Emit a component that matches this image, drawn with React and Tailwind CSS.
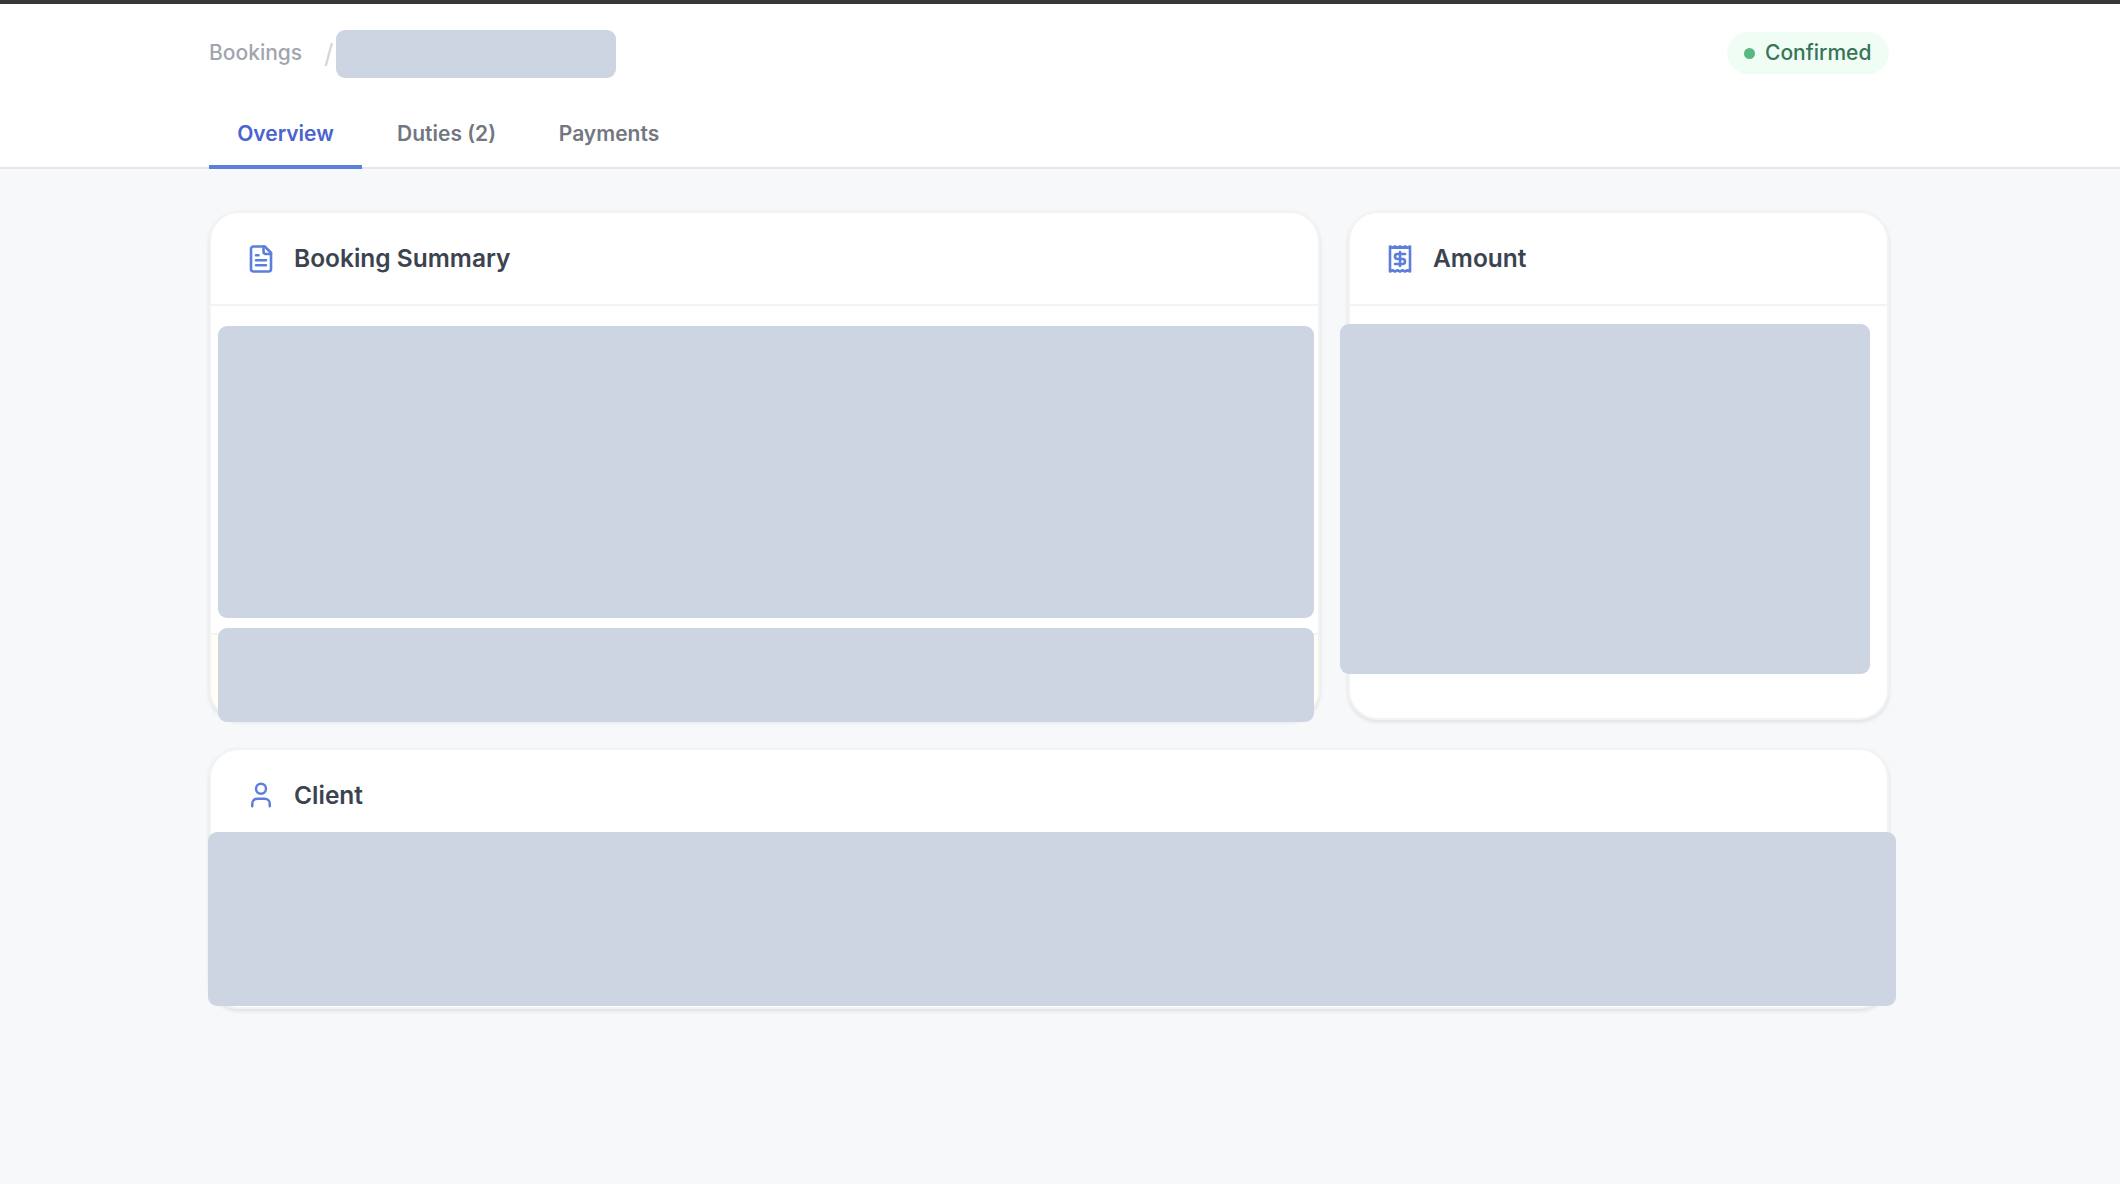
import React, { useState } from "react";
import { User } from "lucide-react";

const tabs = [
  { id: "overview", label: "Overview", className: "w-[153px]" },
  { id: "duties", label: "Duties (2)", className: "w-[169px]" },
  { id: "payments", label: "Payments", className: "w-[156px]" },
];

const Icon = ({ children }) => (
  <svg
    viewBox="0 0 24 24"
    fill="none"
    stroke="currentColor"
    strokeWidth="2.1"
    strokeLinecap="round"
    strokeLinejoin="round"
    className="size-[30px] text-[#5b7fdb]"
  >
    {children}
  </svg>
);

const DocumentIcon = () => (
  <Icon>
    <path d="M15 2H6a2 2 0 0 0-2 2v16a2 2 0 0 0 2 2h12a2 2 0 0 0 2-2V7Z" />
    <path d="M14 2v4a2 2 0 0 0 2 2h4M10 9H8M16 13H8M16 17H8" />
  </Icon>
);

const ReceiptIcon = () => (
  <Icon>
    <path d="M4 2v20l2-1 2 1 2-1 2 1 2-1 2 1 2-1 2 1V2l-2 1-2-1-2 1-2-1-2 1-2-1-2 1Z" />
    <path d="M16 8h-6a2 2 0 1 0 0 4h4a2 2 0 1 1 0 4H8M12 17.5v-11" />
  </Icon>
);

const CardHeader = ({ icon, title, className = "h-[91px]" }) => (
  <div className={`flex items-center gap-[18px] pl-[35px] ${className}`}>
    {icon}
    <h2 className="pb-px text-[24.5px] leading-8 font-semibold text-[#3b4350]">{title}</h2>
  </div>
);

const Card = ({ className = "", children }) => (
  <section
    className={`rounded-[30px] border-2 border-[#f2f3f5] bg-white shadow-[0_2px_4px_rgba(0,0,0,0.1)] ${className}`}
  >
    {children}
  </section>
);

const App = () => {
  const [active, setActive] = useState("overview");

  return (
    <div className="min-h-[1184px] w-[2120px] overflow-hidden bg-[#f7f8fa] font-['Inter',sans-serif]">
      {/* Header */}
      <header className="h-[169px] border-t-4 border-b-2 border-t-[#383838] border-b-[#e5e7eb] bg-white pr-[231px] pl-[209px]">
        <div className="flex h-[98px] items-center justify-between">
          <div className="flex items-center pt-[2px] text-[21px]">
            <a href="#" className="w-[93px] pb-[2px] font-medium text-[#a0a5af]">Bookings</a>
            <span className="ml-[22px] w-3 pb-px text-[26px] leading-8 text-[#d1d5db]">/</span>
            <div className="h-12 w-[280px] rounded-[9px] bg-[#ccd5e1]" />
          </div>
          <div className="flex h-[42px] w-[162px] items-center gap-2.5 rounded-full bg-[#effdf5] pl-[17px]">
            <span className="size-[11px] rounded-full bg-[#57b881]" />
            <span className="text-[21px] font-medium text-[#387457]">Confirmed</span>
          </div>
        </div>
        <nav className="flex h-[67px]">
          {tabs.map((tab) => (
            <button
              key={tab.id}
              onClick={() => setActive(tab.id)}
              className={`h-[67px] border-b-4 pt-[3px] pb-[3px] text-[21px] font-semibold ${tab.className} ${
                active === tab.id
                  ? "border-[#5b7fdb] text-[#4a63cf]"
                  : "border-transparent text-[#727780]"
              }`}
            >
              {tab.label}
            </button>
          ))}
        </nav>
      </header>

      {/* Cards */}
      <main className="w-[1889px] pt-[42px] pl-[209px]">
        <div className="flex gap-[28px]">
          <Card className="h-[509px] w-[1111px]">
            <CardHeader icon={<DocumentIcon />} title="Booking Summary" />
            <div className="border-t-2 border-[#f3f4f6] px-[7px] pt-5">
              <div className="h-[292px] w-[1096px] rounded-[9px] bg-[#ccd5e1]" />
            </div>
            {/* Notes strip sits slightly lower than the block it holds */}
            <div className="mt-[15px] h-[85px] rounded-b-[28px] border-t-2 border-[#f3f4f6] bg-[#fffef5] px-[7px]">
              <div className="-mt-[7px] h-[94px] w-[1096px] rounded-[9px] bg-[#ccd5e1]" />
            </div>
          </Card>
          <Card className="h-[509px] w-[541px]">
            <CardHeader icon={<ReceiptIcon />} title="Amount" />
            <div className="border-t-2 border-[#f3f4f6] pt-[18px]">
              <div className="-ml-[10px] h-[350px] w-[530px] rounded-[9px] bg-[#ccd5e1]" />
            </div>
          </Card>
        </div>
        <Card className="mt-[28px] h-[261px] w-[1680px]">
          <CardHeader
            className="h-[82px] pt-[8px]"
            icon={<User className="size-[30px] text-[#5b7fdb]" />}
            title="Client"
          />
          <div className="-ml-[3px] h-[174px] w-[1688px] rounded-[9px] bg-[#ccd5e1]" />
        </Card>
      </main>
    </div>
  );
};

export default App;
